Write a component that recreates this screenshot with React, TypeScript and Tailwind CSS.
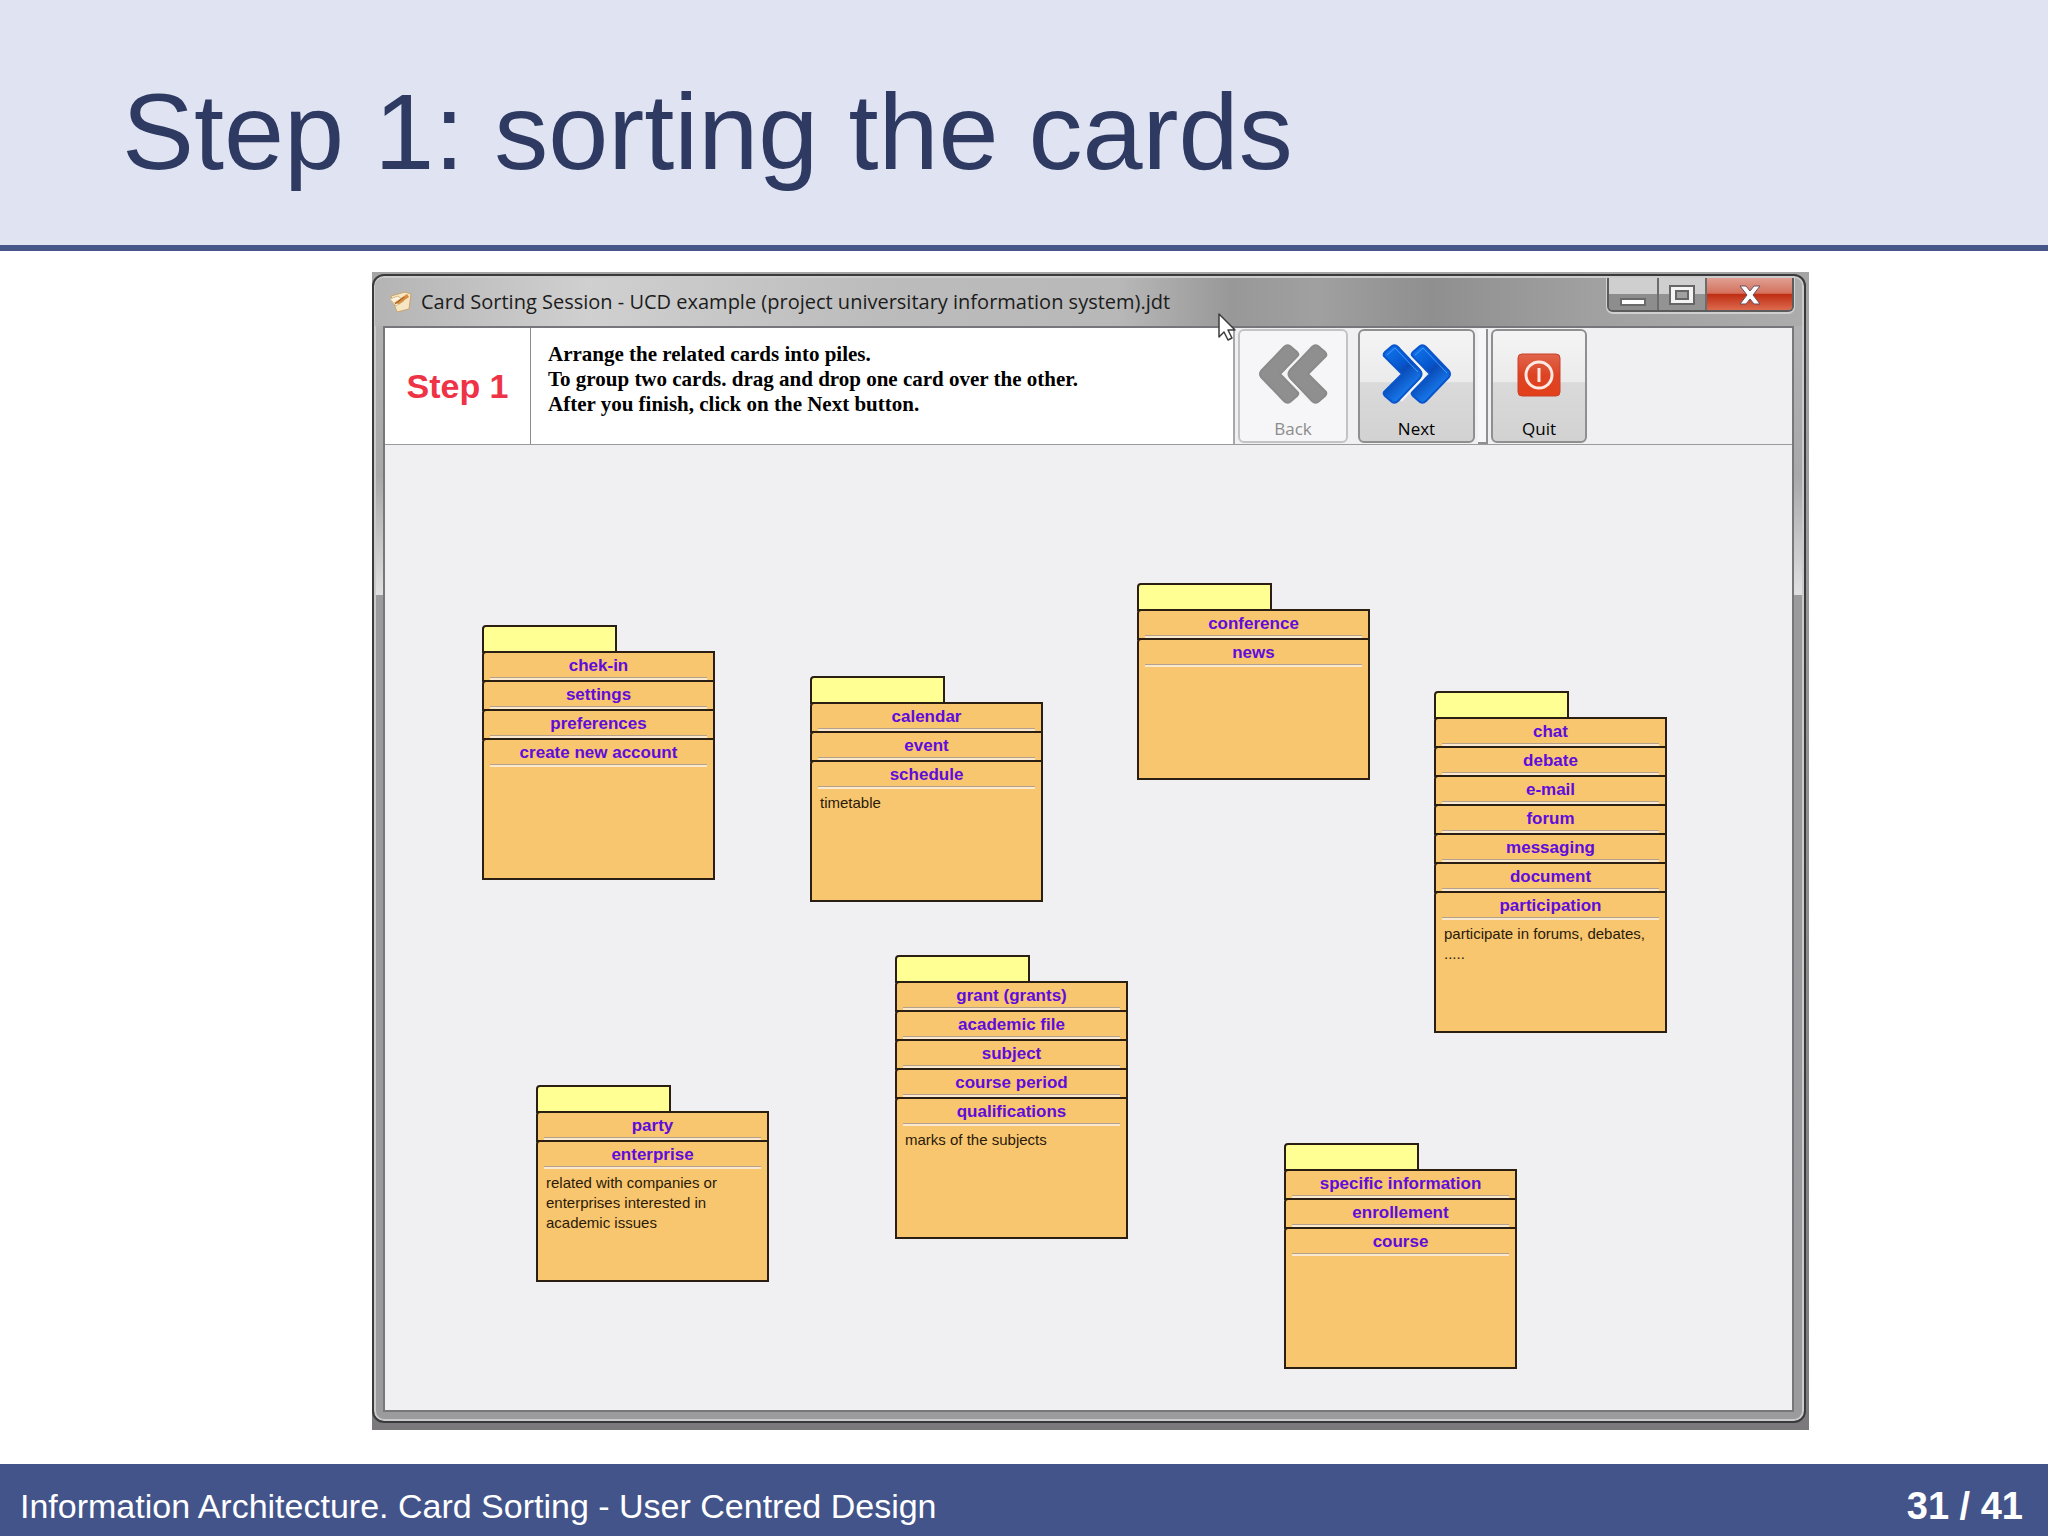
const piles = [
  { x: 97, y: 180, cards: ["chek-in", "settings", "preferences", "create new account"], note: "" },
  { x: 425, y: 231, cards: ["calendar", "event", "schedule"], note: "timetable" },
  { x: 752, y: 138, cards: ["conference", "news"], note: "" },
  {
    x: 1049,
    y: 246,
    cards: ["chat", "debate", "e-mail", "forum", "messaging", "document", "participation"],
    note: "participate in forums, debates, .....",
  },
  {
    x: 510,
    y: 510,
    cards: ["grant (grants)", "academic file", "subject", "course period", "qualifications"],
    note: "marks of the subjects",
  },
  {
    x: 151,
    y: 640,
    cards: ["party", "enterprise"],
    note: "related with companies or enterprises interested in academic issues",
  },
  { x: 899, y: 698, cards: ["specific information", "enrollement", "course"], note: "" },
]

function Chevrons({ back = false }: { back?: boolean }) {
  const fill = back ? "#8f8f8f" : "url(#blue)"
  const edge = back ? "#8a8a8a" : "#0a55cc"
  return (
    <svg viewBox="0 0 70 62" className={back ? "h-[62px] w-[70px] -scale-x-100" : "h-[62px] w-[70px]"} aria-hidden="true">
      <defs>
        <linearGradient id="blue" x1="0" y1="0" x2="0.6" y2="1">
          <stop offset="0" stopColor="#1379ee" />
          <stop offset="0.45" stopColor="#0757cf" />
          <stop offset="0.55" stopColor="#0a4bb8" />
          <stop offset="1" stopColor="#1c8bff" />
        </linearGradient>
      </defs>
      <g fill={fill} stroke={edge} strokeWidth="2" strokeLinejoin="round">
        <path d="M2 13 Q1 11 3 9 L10 3 Q13 1 16 4 L38 27 Q41 31 38 35 L16 58 Q13 61 10 59 L3 53 Q1 51 2 49 L20 31 Z" />
        <path d="M30 13 Q29 11 31 9 L38 3 Q41 1 44 4 L67 28 Q69 31 67 34 L44 58 Q41 61 38 59 L31 53 Q29 51 30 49 L48 31 Z" />
      </g>
      <path
        d="M17 4 L39 27 Q42 31 39 35 L17 58"
        fill="none"
        stroke="#f4f4f4"
        strokeWidth="2"
        transform="translate(2 0)"
      />
      {!back && <path d="M5 12 L13 5 L36 29 M33 12 L41 5 L65 30" fill="none" stroke="#3f9bff" strokeWidth="1" />}
    </svg>
  )
}

function PowerIcon() {
  return (
    <svg viewBox="0 0 44 44" className="h-11 w-11" aria-hidden="true">
      <defs>
        <linearGradient id="red" x1="0" y1="0" x2="0" y2="1">
          <stop offset="0" stopColor="#e0654c" />
          <stop offset="0.5" stopColor="#dd4424" />
          <stop offset="1" stopColor="#e2401a" />
        </linearGradient>
      </defs>
      <rect x="1" y="1" width="42" height="42" rx="4" fill="url(#red)" stroke="#c9412a" />
      <circle cx="22" cy="22" r="13" fill="none" stroke="#ffe9e2" strokeWidth="3" />
      <path d="M22 15 V29" stroke="#ffe9e2" strokeWidth="3" />
    </svg>
  )
}

function AppIcon() {
  return (
    <svg viewBox="0 0 24 24" className="h-6 w-6" aria-hidden="true">
      <path d="M2 6 L16 2 L22 4 L20 19 L8 22 L5 14 Z" fill="#f7e6c4" stroke="#c9a36c" />
      <path d="M1 9 L9 6 L15 11 L7 16 Z" fill="#fbf3dd" stroke="#d8b787" />
      <path d="M5 13 L18 4 L20 7 L10 14 Z" fill="#d98a3d" />
      <path d="M6 14 L15 7" stroke="#8a5a2c" strokeWidth="1" />
    </svg>
  )
}

function Pile({ cards, note }: { cards: string[]; note: string }) {
  return (
    <>
      <div className="-mb-0.5 h-7 w-[135px] rounded-tl border-2 border-[#2b1f14] bg-[#ffff93]" />
      {cards.map((card, i) => {
        const last = i === cards.length - 1
        return (
          <div
            key={card}
            className={
              last
                ? "h-[142px] rounded-tl border-2 border-[#2b1f14] bg-[#f8c66f] px-1.5"
                : "-mb-0.5 h-[31px] rounded-tl border-2 border-[#2b1f14] bg-[#f8c66f] px-1.5"
            }
          >
            <h3 className="border-b border-[#b5a08c] pt-0.5 text-center text-[17px] leading-[22px] font-bold text-[#5f0cdc]">
              {card}
            </h3>
            <div className="h-0.5 bg-[#fbe9cf]" />
            {last && note && <p className="px-0.5 pt-1 text-[15px] leading-5 text-[#2a1a0a]">{note}</p>}
          </div>
        )
      })}
    </>
  )
}

function WindowControls() {
  return (
    <div className="flex h-[34px] overflow-hidden rounded-b-md border-2 border-t-0 border-[#5c5c5c] shadow-[0_1px_0_1px_#d0d0d0]">
      <button
        aria-label="Minimize"
        className="flex w-[50px] items-center justify-center border-r-2 border-[#6c6c6c] bg-linear-to-b from-[#cfcfcf] from-50% to-[#8d8d8d] to-50% pt-4"
      >
        <span className="h-2 w-[26px] border-2 border-[#6a6a6a] bg-white" />
      </button>
      <button
        aria-label="Maximize"
        className="flex w-12 items-center justify-center border-r-2 border-[#6c6c6c] bg-linear-to-b from-[#cfcfcf] from-50% to-[#939393] to-50% pt-0.5"
      >
        <svg viewBox="0 0 26 20" className="h-5 w-[26px]" aria-hidden="true">
          <rect x="1" y="1" width="24" height="18" fill="#f4f4f4" stroke="#666" strokeWidth="2" />
          <rect x="7" y="6" width="12" height="8" fill="#a0a0a0" stroke="#666" strokeWidth="2" />
        </svg>
      </button>
      <button
        aria-label="Close"
        className="flex w-[85px] items-center justify-center bg-[linear-gradient(#e0a093,#d4705c_48%,#bf2c12_50%,#dc6a4e)] pt-0.5"
      >
        <svg viewBox="0 0 22 20" className="h-5 w-[22px]" aria-hidden="true">
          <path
            d="M1 1 H7 L11 6 L15 1 H21 L14 10 L21 19 H15 L11 14 L7 19 H1 L8 10 Z"
            fill="#fff"
            stroke="#6b4f5c"
            strokeWidth="1"
          />
        </svg>
      </button>
    </div>
  )
}

const toolButton = "flex h-[114px] flex-col items-center justify-end rounded-md border-2 text-[17px] leading-6"

export default function App() {
  return (
    <div className="flex min-h-screen flex-col bg-white font-['Liberation_Sans',Arial,sans-serif]">
      <header className="flex h-[251px] items-center border-b-6 border-[#46568a] bg-[#e0e3f2] px-[122px] pt-[18px]">
        <h1 className="text-[108px] leading-none text-[#2e3a62]">Step 1: sorting the cards</h1>
      </header>

      <main className="flex flex-1 flex-col pt-[21px] pr-[239px] pb-[34px] pl-[372px]">
        <div className="flex flex-1 flex-col bg-linear-to-b from-[#a5a5a5] to-[#7b797b] pt-0.5 pr-[3px] pb-[7px]">
          <div className="flex flex-1 flex-col rounded-xl border-2 border-[#3a3a3c] bg-[#9b9a9c] bg-[linear-gradient(#b4b4b4,#a8a8a8_200px,#e0e0e0_319px,#9b9a9c_319px)] pr-2.5 pb-[9px] pl-[9px] shadow-[inset_0_0_0_2px_#cbcbcb]">
            {/* Title bar */}
            <div className="-mx-2 mt-0.5 flex h-12 justify-between rounded-t-lg bg-[linear-gradient(90deg,#b4b4b4,#d0d0d0_15%,#bcbcbc_35%,#b8b8b8_52%,#989898_60%,#a0a0a0_66%,#8f8f8f_74%,#a0a0a0_85%,#acacac)] pr-2 pl-3.5">
              <div className="flex items-center gap-2">
                <AppIcon />
                <h2 className="font-['Open_Sans','Noto_Sans',sans-serif] text-[20px] leading-7 text-[#1c1c1c]">
                  Card Sorting Session - UCD example (project universitary information system).jdt
                </h2>
              </div>
              <WindowControls />
            </div>

            <div className="flex flex-1 flex-col border-2 border-[#77767a] bg-[#f0eff1]">
              {/* Step description and toolbar */}
              <div className="relative flex h-[117px] border-b border-[#9a9a9a]">
                <div className="flex w-[146px] items-center justify-center border-r border-[#8c8c8c] bg-white text-[34px] font-bold text-[#ee3347]">
                  Step 1
                </div>
                <p className="w-[704px] border-r-2 border-[#a8a8a8] bg-white pt-3.5 pl-[17px] font-['Liberation_Serif',serif] text-[21px] leading-[25px] font-bold whitespace-nowrap text-black">
                  Arrange the related cards into piles.
                  <br />
                  To group two cards. drag and drop one card over the other.
                  <br />
                  After you finish, click on the Next button.
                </p>
                <div className="flex pt-px pl-[3px] font-['Open_Sans','Noto_Sans',sans-serif]">
                  <button disabled className={`${toolButton} w-[110px] border-[#c3c3c3] bg-[#f6f5f7] text-[#8c8c8c]`}>
                    <Chevrons back />
                    <span className="mt-3">Back</span>
                  </button>
                  <button
                    className={`${toolButton} ml-2.5 w-[117px] border-[#8f8f8f] bg-[linear-gradient(#f4f4f4,#ebebeb_46%,#dadada_47%,#d2d2d2)] text-black`}
                  >
                    <Chevrons />
                    <span className="mt-3">Next</span>
                  </button>
                  <div className="mx-[3px] w-2.5 border-r-2 border-b-2 border-[#8f8f8f] bg-[#f6f5f7]" />
                  <button
                    className={`${toolButton} w-[96px] border-[#8f8f8f] bg-[linear-gradient(#f4f4f4,#ebebeb_46%,#dadada_47%,#d2d2d2)] text-black`}
                  >
                    <PowerIcon />
                    <span className="mt-5">Quit</span>
                  </button>
                </div>
                {/* Mouse pointer */}
                <svg viewBox="0 0 18 30" className="absolute -top-4 left-[833px] h-[30px] w-[18px]" aria-hidden="true">
                  <path
                    d="M1 2 V25 L6 20 L10 28 L14 26 L10 18 H17 Z"
                    fill="#fff"
                    stroke="#3c3c3c"
                    strokeWidth="1.500"
                    strokeLinejoin="round"
                  />
                </svg>
              </div>

              {/* Card board */}
              <div className="relative flex-1">
                {piles.map((pile) => (
                  <div key={pile.cards[0]} className="absolute w-[233px]" style={{ left: pile.x, top: pile.y }}>
                    <Pile cards={pile.cards} note={pile.note} />
                  </div>
                ))}
              </div>
            </div>
          </div>
        </div>
      </main>

      <footer className="flex h-[72px] items-center justify-between bg-[#43548b] pt-3 pr-[25px] pl-5 text-white">
        <p className="text-[34px] leading-10">Information Architecture. Card Sorting - User Centred Design</p>
        <p className="text-[38px] leading-10 font-bold">31 / 41</p>
      </footer>
    </div>
  )
}
